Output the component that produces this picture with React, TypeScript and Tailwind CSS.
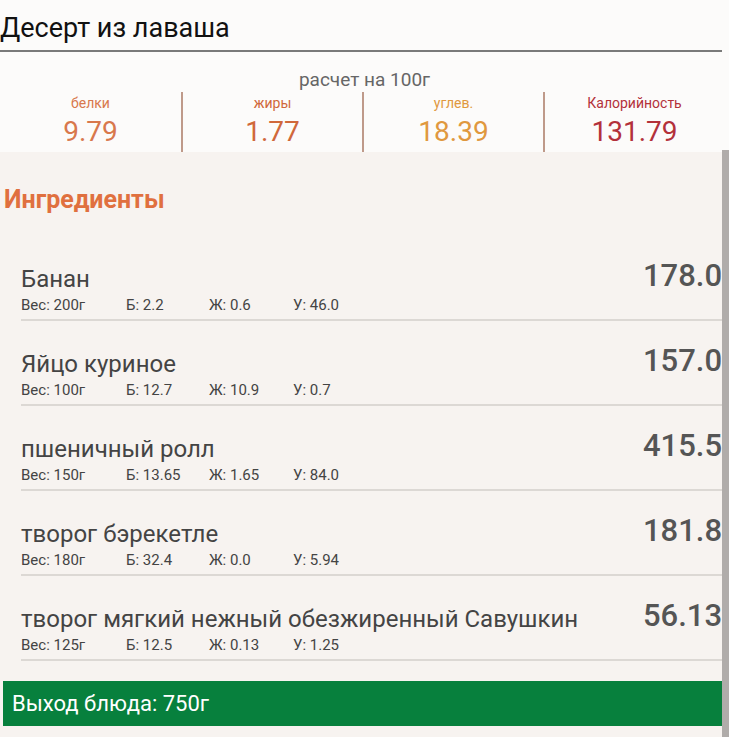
import React from "react";

const items = [
  { name: "Банан", w: "200г", b: "2.2", z: "0.6", u: "46.0", kcal: "178.0" },
  { name: "Яйцо куриное", w: "100г", b: "12.7", z: "10.9", u: "0.7", kcal: "157.0" },
  { name: "пшеничный ролл", w: "150г", b: "13.65", z: "1.65", u: "84.0", kcal: "415.5" },
  { name: "творог бэрекетле", w: "180г", b: "32.4", z: "0.0", u: "5.94", kcal: "181.8" },
  { name: "творог мягкий нежный обезжиренный Савушкин", w: "125г", b: "12.5", z: "0.13", u: "1.25", kcal: "56.13" },
];

export default function App() {
  return (
    <div className="w-[729px] h-[737px] overflow-hidden bg-[#f7f3f0] relative" style={{ fontFamily: "Roboto, sans-serif" }}>
      <div className="bg-[#fcfbfa]">
        <div className="pt-[11px] h-[52px] border-b-2 border-[#7a7a7a] mr-[7px]">
          <div className="text-[27px] leading-[34px] text-[#111]">Десерт из лаваша</div>
        </div>
        <div className="text-center text-[19px] leading-[24px] text-[#666] pt-[16px]">расчет на 100г</div>
        <div className="grid grid-cols-4 h-[60px] pr-[5px]">
          {[
            { l: "белки", v: "9.79", c: "text-[#d8784c]" },
            { l: "жиры", v: "1.77", c: "text-[#d0683a]" },
            { l: "углев.", v: "18.39", c: "text-[#e0983e]" },
            { l: "Калорийность", v: "131.79", c: "text-[#b3313a]" },
          ].map((x, i) => (
            <div key={i} className={`flex flex-col items-center ${i > 0 ? "border-l-2 border-[#bf9a8a]" : ""} ${x.c}`}>
              <div className="text-[14px] leading-[18px] mt-[2px]">{x.l}</div>
              <div className="text-[28px] leading-[32px] mt-[4px]">{x.v}</div>
            </div>
          ))}
        </div>
      </div>
      <div className="pr-[7px]">
        <div className="pl-[4px] pt-[31px] text-[25px] leading-[34px] font-bold text-[#e0703f]">Ингредиенты</div>
        <div className="pt-[19px]">
          {items.map((it, i) => (
            <div key={i} className="ml-[21px] border-b-2 border-[#dcd8d4] h-[85px] flex justify-between">
              <div className="flex flex-col pt-[28px]">
                <div className="text-[24px] leading-[30px] text-[#444]">{it.name}</div>
                <div className="flex text-[15px] leading-[18px] text-[#444] mt-[2px]">
                  <span className="w-[105px]">Вес: {it.w}</span>
                  <span className="w-[83px]">Б: {it.b}</span>
                  <span className="w-[84px]">Ж: {it.z}</span>
                  <span>У: {it.u}</span>
                </div>
              </div>
              <div className="text-[31px] leading-[34px] font-medium text-[#555] pt-[23px]">{it.kcal}</div>
            </div>
          ))}
        </div>
        <div className="mt-[20px] ml-[3px] h-[45px] bg-[#07803d] flex items-center pl-[9px] text-white text-[22px]">
          Выход блюда: 750г
        </div>
      </div>
      <div className="absolute right-0 top-[150px] bottom-0 w-[7px] bg-[#b0acaa]" />
    </div>
  );
}
